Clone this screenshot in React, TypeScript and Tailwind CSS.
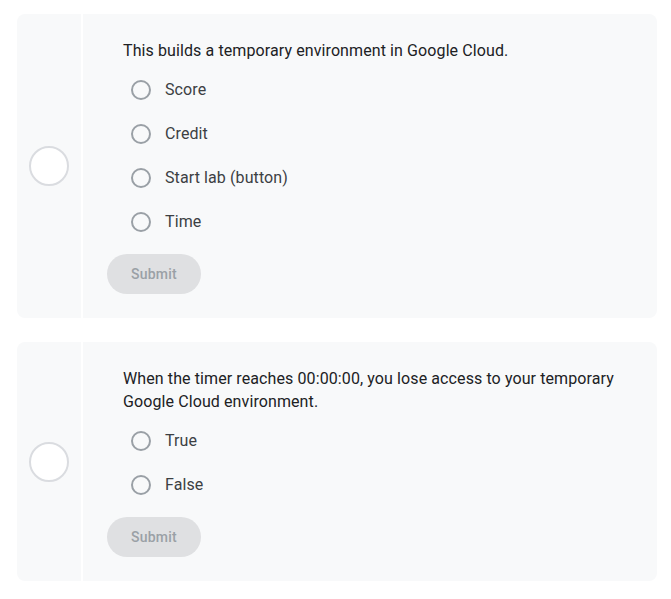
import React from "react";

type Q = { text: string; options: string[] };

const questions: Q[] = [
  {
    text: "This builds a temporary environment in Google Cloud.",
    options: ["Score", "Credit", "Start lab (button)", "Time"],
  },
  {
    text: "When the timer reaches 00:00:00, you lose access to your temporary Google Cloud environment.",
    options: ["True", "False"],
  },
];

function Card({ q }: { q: Q }) {
  return (
    <div className="flex w-[640px] rounded-lg bg-[#f8f9fa] overflow-hidden">
      <div className="flex w-[66px] shrink-0 items-center justify-center border-r-2 border-white">
        <div className="h-10 w-10 rounded-full border-2 border-[#dadce0] bg-white" />
      </div>
      <div className="flex-1 pt-6 pb-6 pl-6 pr-6">
        <div className="pl-4 pt-[1px] text-[16px] leading-[23px] tracking-[0.1px] text-[#202124]">{q.text}</div>
        <div className="mt-[6px] flex flex-col">
          {q.options.map((o) => (
            <div key={o} className="flex h-11 items-center pl-6">
              <div className="h-5 w-5 rounded-full border-2 border-[#9aa0a6] bg-transparent" />
              <span className="ml-[14px] text-[16px] tracking-[0.1px] text-[#3c4043]">{o}</span>
            </div>
          ))}
        </div>
        <button className="mt-[10px] flex h-10 w-[94px] items-center justify-center rounded-full bg-[#dfe0e2] text-[14px] font-medium tracking-[0.2px] text-[#9aa0a6]">
          Submit
        </button>
      </div>
    </div>
  );
}

export default function App() {
  return (
    <div
      className="min-h-screen bg-white pl-[17px] pt-[14px]"
      style={{ fontFamily: "Roboto, 'Liberation Sans', sans-serif" }}
    >
      <div className="flex flex-col gap-6">
        {questions.map((q, i) => (
          <Card key={i} q={q} />
        ))}
      </div>
    </div>
  );
}
